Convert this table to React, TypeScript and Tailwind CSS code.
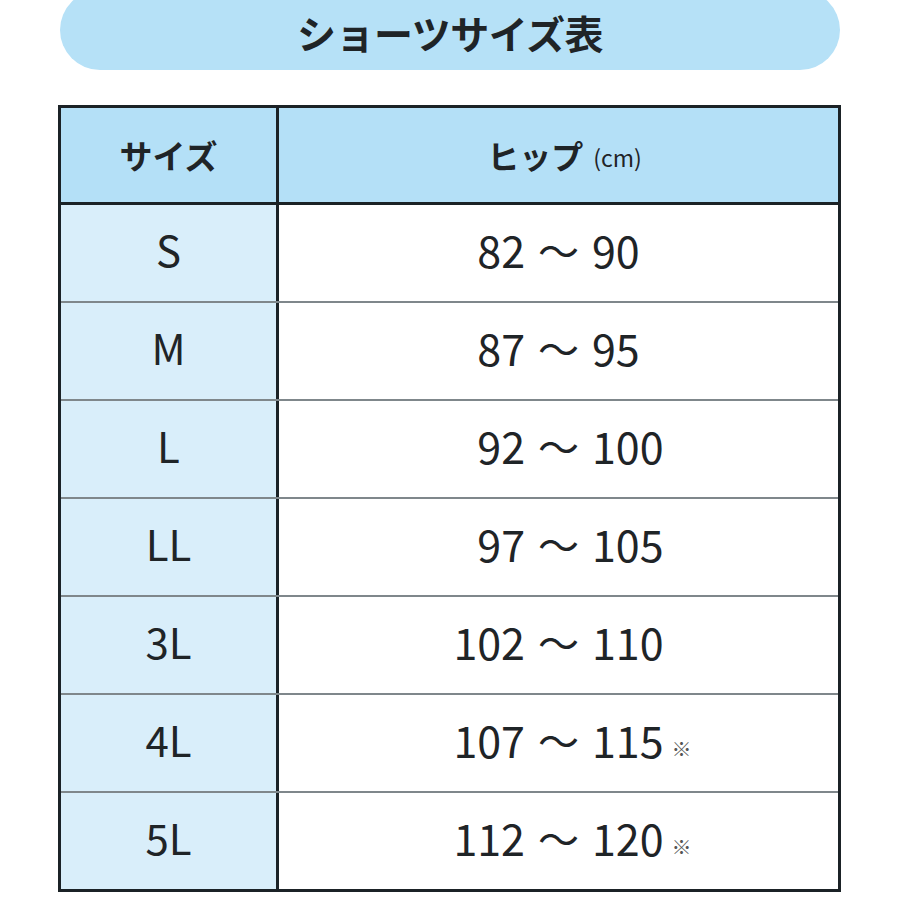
import React from 'react';

type Row = {
    size: string;
    from: string;
    to: string;
    note?: boolean;
};

const rows: Row[] = [
    { size: 'S', from: '82', to: '90' },
    { size: 'M', from: '87', to: '95' },
    { size: 'L', from: '92', to: '100' },
    { size: 'LL', from: '97', to: '105' },
    { size: '3L', from: '102', to: '110' },
    { size: '4L', from: '107', to: '115', note: true },
    { size: '5L', from: '112', to: '120', note: true },
];

const App: React.FC = () => {
    return (
        <div className="w-[900px] h-[900px] bg-white overflow-hidden font-['Noto_Sans_CJK_JP','Noto_Sans',sans-serif] text-[#1f2427]">
            {/* Title pill, top cut off by the frame */}
            <div className="mx-[60px] mt-[-10px] h-[80px] rounded-[40px] bg-[#b6e1f7] flex items-center justify-center pt-[4px]">
                <span className="text-[39px] font-bold leading-none tracking-[-0.5px]">ショーツサイズ表</span>
            </div>

            {/* Size table */}
            <div className="ml-[58px] mt-[35px] w-[783px] border-[3px] border-[#1b2226]">
                <div className="flex h-[97px] bg-[#b4e0f7] border-b-[3px] border-[#1b2226]">
                    <div className="w-[218px] flex items-center justify-center border-r-[3px] border-[#1b2226]">
                        <span className="text-[33px] font-bold leading-none">サイズ</span>
                    </div>
                    <div className="flex-1 flex items-center justify-center gap-[10px] pl-[12px]">
                        <span className="text-[32px] font-bold leading-none">ヒップ</span>
                        <span className="text-[23px] leading-none mt-[4px]">(cm)</span>
                    </div>
                </div>

                {rows.map((row, i) => (
                    <div
                        key={row.size}
                        className={
                            i < rows.length - 1
                                ? 'flex h-[98px] border-b-2 border-[#7f878b]'
                                : 'flex h-[96px]'
                        }
                    >
                        <div className="w-[218px] bg-[#d9eefa] flex items-center justify-center pb-[8px] border-r-[3px] border-[#1b2226]">
                            <span className="text-[42px] leading-none">{row.size}</span>
                        </div>
                        <div className="flex-1 grid grid-cols-[1fr_auto_1fr] items-center gap-x-[13px] pb-[8px] text-[43px] leading-none">
                            <span className="text-right">{row.from}</span>
                            <span className="text-[41px]">〜</span>
                            <span className="flex items-end">
                                {row.to}
                                {row.note && (
                                    <span className="text-[20px] text-[#555] ml-[8px] mb-[2px]">※</span>
                                )}
                            </span>
                        </div>
                    </div>
                ))}
            </div>
        </div>
    );
};

export default App;
